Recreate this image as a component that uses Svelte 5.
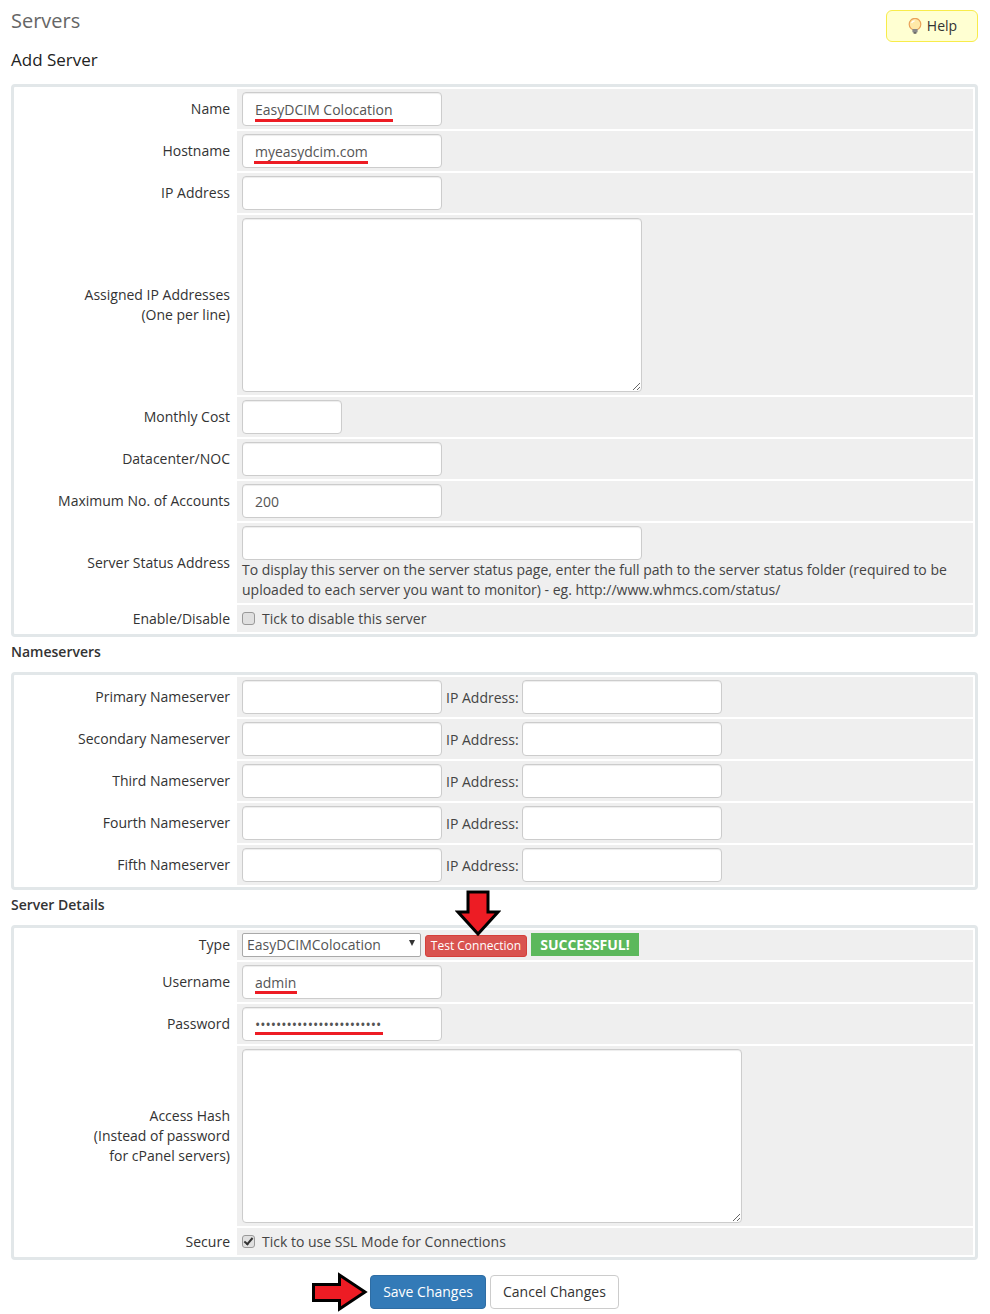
<script lang="ts">
	const nameservers = ['Primary', 'Secondary', 'Third', 'Fourth', 'Fifth'];
</script>

<div class="page">
	<header class="top">
		<h1>Servers</h1>
		<button class="help" type="button">
			<svg viewBox="0 0 16 16" width="16" height="16" aria-hidden="true">
				<circle cx="8" cy="6.2" r="5.8" fill="#ffe9a8" stroke="#e9a25a" stroke-width="1.2" />
				<path d="M4.6 5a3.4 3.4 0 0 1 3-2.2" fill="none" stroke="#fff" stroke-width="1.2" />
				<rect x="5.4" y="11" width="5.2" height="3.4" rx="0.6" fill="#8a8a8a" />
				<rect x="6.6" y="14.2" width="2.8" height="1.5" fill="#555" />
			</svg>
			Help
		</button>
	</header>
	<h2>Add Server</h2>

	<section class="box">
		<div class="row">
			<div class="label">Name</div>
			<div class="field">
				<span class="marked">
					<input class="w200" value="EasyDCIM Colocation" />
					<i class="mark" style="top: 27px; left: 13px; width: 138px"></i>
				</span>
			</div>
		</div>
		<div class="row">
			<div class="label">Hostname</div>
			<div class="field">
				<span class="marked">
					<input class="w200" value="myeasydcim.com" />
					<i class="mark" style="top: 27px; left: 12px; width: 114px"></i>
				</span>
			</div>
		</div>
		<div class="row">
			<div class="label">IP Address</div>
			<div class="field"><input class="w200" /></div>
		</div>
		<div class="row">
			<div class="label">Assigned IP Addresses<br />(One per line)</div>
			<div class="field"><textarea class="w400"></textarea></div>
		</div>
		<div class="row">
			<div class="label">Monthly Cost</div>
			<div class="field"><input class="w100" /></div>
		</div>
		<div class="row">
			<div class="label">Datacenter/NOC</div>
			<div class="field"><input class="w200" /></div>
		</div>
		<div class="row">
			<div class="label">Maximum No. of Accounts</div>
			<div class="field"><input class="w200" value="200" /></div>
		</div>
		<div class="row">
			<div class="label">Server Status Address</div>
			<div class="field field--stack">
				<input class="w400" />
				<p>To display this server on the server status page, enter the full path to the server status folder (required to be uploaded to each server you want to monitor) - eg. http://www.whmcs.com/status/</p>
			</div>
		</div>
		<div class="row row--thin">
			<div class="label">Enable/Disable</div>
			<label class="field"><input class="check" type="checkbox" /> Tick to disable this server</label>
		</div>
	</section>

	<h3>Nameservers</h3>
	<section class="box">
		{#each nameservers as ns}
			<div class="row">
				<div class="label">{ns} Nameserver</div>
				<div class="field">
					<input class="w200" />
					<span class="ip">IP Address:</span>
					<input class="w200" />
				</div>
			</div>
		{/each}
	</section>

	<h3>Server Details</h3>
	<section class="box">
		<div class="row row--type">
			<div class="label">Type</div>
			<div class="field">
				<span class="select-wrap">
					<select><option>EasyDCIMColocation</option></select>
				</span>
				<button class="test" type="button">Test Connection</button>
				<span class="ok">SUCCESSFUL!</span>
			</div>
		</div>
		<div class="row">
			<div class="label">Username</div>
			<div class="field">
				<span class="marked">
					<input class="w200" value="admin" />
					<i class="mark" style="top: 26px; left: 13px; width: 42px"></i>
				</span>
			</div>
		</div>
		<div class="row">
			<div class="label">Password</div>
			<div class="field">
				<span class="marked">
					<input class="w200" type="password" value="aaaaaaaaaaaaaaaaaaaaaaaa" />
					<i class="mark" style="top: 25px; left: 13px; width: 128px"></i>
				</span>
			</div>
		</div>
		<div class="row">
			<div class="label">Access Hash<br />(Instead of password<br />for cPanel servers)</div>
			<div class="field"><textarea class="w500"></textarea></div>
		</div>
		<div class="row row--thin">
			<div class="label">Secure</div>
			<label class="field"><input class="check" type="checkbox" checked /> Tick to use SSL Mode for Connections</label>
		</div>

		<svg class="arrow arrow--down" viewBox="0 0 46 46" width="46" height="46" aria-hidden="true">
			<path d="M13 2h20v20h10L23 44 3 22h10z" fill="#ed1c24" stroke="#000" stroke-width="3" />
		</svg>
	</section>

	<footer class="actions">
		<span class="save-wrap">
			<svg class="arrow arrow--right" viewBox="0 0 58 40" width="58" height="40" aria-hidden="true">
				<path d="M2.5 12.5h26V3L54 20 28.5 37v-8.5h-26z" fill="#ed1c24" stroke="#000" stroke-width="3" />
			</svg>
			<button class="btn btn--primary" type="button">Save Changes</button>
		</span>
		<button class="btn" type="button">Cancel Changes</button>
	</footer>
</div>

<style>
	:global(body) {
		margin: 0;
		background: #fff;
	}

	.page {
		width: 990px;
		height: 1314px;
		box-sizing: border-box;
		padding: 0 12px 0 11px;
		overflow: hidden;
		color: #333;
		font-family: 'Open Sans', sans-serif;
		font-size: 14px;
		line-height: 20px;
	}

	.top {
		display: flex;
		justify-content: space-between;
		align-items: flex-start;
		height: 49px;
		padding-top: 10px;
		box-sizing: border-box;
	}

	h1 {
		margin: -1px 0 0;
		color: #666;
		font-size: 20px;
		font-weight: 400;
		line-height: 24px;
	}

	.help {
		display: flex;
		align-items: center;
		justify-content: center;
		gap: 4px;
		width: 92px;
		height: 32px;
		padding: 0;
		border: 1px solid #f8ec4a;
		border-radius: 6px;
		background: #ffffd2;
		color: #333;
		font: inherit;
	}

	h2 {
		margin: 0;
		height: 35px;
		color: #222;
		font-size: 17px;
		font-weight: 400;
		line-height: 22px;
	}

	h3 {
		margin: 0;
		height: 35px;
		padding-top: 5px;
		box-sizing: border-box;
		font-size: 14px;
		font-weight: 600;
		line-height: 20px;
	}

	.box {
		position: relative;
		display: flex;
		flex-direction: column;
		gap: 2px;
		padding: 2px;
		border: 3px solid #e2e7e9;
		border-radius: 4px;
	}

	.row {
		display: grid;
		grid-template-columns: 219px 1fr;
		gap: 2px;
	}

	.label {
		align-self: center;
		padding-right: 5px;
		text-align: right;
	}

	.field {
		display: flex;
		align-items: center;
		min-height: 40px;
		box-sizing: border-box;
		padding: 3px 5px;
		background: #efefef;
		color: #444;
	}

	.row--thin .field {
		min-height: 27px;
		padding: 0 5px;
	}

	.row--type .field {
		min-height: 30px;
		padding: 0 5px;
		gap: 4px;
	}

	.field--stack {
		flex-direction: column;
		align-items: flex-start;
		min-height: 80px;
	}

	.field--stack p {
		margin: 0;
	}

	input:not(.check),
	textarea {
		display: block;
		box-sizing: border-box;
		height: 34px;
		padding: 6px 12px;
		border: 1px solid #ccc;
		border-radius: 4px;
		background: #fff;
		box-shadow: inset 0 1px 1px rgb(0 0 0 / 7.5%);
		color: #555;
		font: inherit;
	}

	textarea {
		height: 174px;
	}

	.w100 {
		width: 100px;
	}

	.w200 {
		width: 200px;
	}

	.w400 {
		width: 400px;
	}

	.w500 {
		width: 500px;
	}

	.marked {
		position: relative;
		display: block;
	}

	.mark {
		position: absolute;
		height: 3px;
		background: #ed1c24;
	}

	.ip {
		margin: 2px 3px 0 4px;
		white-space: nowrap;
	}

	.check {
		appearance: none;
		position: relative;
		width: 13px;
		height: 13px;
		margin: 0 7px 0 0;
		border: 1px solid #999;
		border-radius: 3px;
		background: #e0e0e0;
	}

	.check:checked::after {
		content: '';
		position: absolute;
		left: 3px;
		top: 0;
		width: 3px;
		height: 7px;
		border: solid #333;
		border-width: 0 2px 2px 0;
		transform: rotate(40deg);
	}

	.select-wrap {
		position: relative;
		display: block;
		margin-top: -1px;
	}

	.select-wrap::after {
		content: '';
		position: absolute;
		right: 6px;
		top: 7px;
		border: solid transparent;
		border-width: 6px 3.5px 0;
		border-top-color: #333;
	}

	select {
		display: block;
		appearance: none;
		width: 179px;
		height: 24px;
		padding: 0 4px;
		border: 1px solid #a9a9a9;
		border-radius: 2px;
		background: #fff;
		color: #555;
		font: inherit;
	}

	.test {
		height: 22px;
		width: 102px;
		margin-top: 1px;
		padding: 0;
		border: 1px solid #d43f3a;
		border-radius: 3px;
		background: #d9534f;
		color: #fff;
		font: inherit;
		font-size: 12px;
	}

	.ok {
		width: 108px;
		height: 23px;
		margin-top: -1px;
		background: #5cb85c;
		color: #fff;
		font-weight: 700;
		line-height: 23px;
		text-align: center;
	}

	.arrow {
		position: absolute;
	}

	.arrow--down {
		left: 441px;
		top: -38px;
	}

	.actions {
		display: flex;
		justify-content: center;
		gap: 4px;
		margin-top: 15px;
	}

	.save-wrap {
		position: relative;
	}

	.arrow--right {
		left: -59px;
		top: -3px;
	}

	.btn {
		display: block;
		height: 34px;
		padding: 6px 12px;
		border: 1px solid #ccc;
		border-radius: 4px;
		background: #fff;
		color: #333;
		font: inherit;
	}

	.btn--primary {
		border-color: #2e6da4;
		background: #337ab7;
		color: #fff;
	}
</style>
